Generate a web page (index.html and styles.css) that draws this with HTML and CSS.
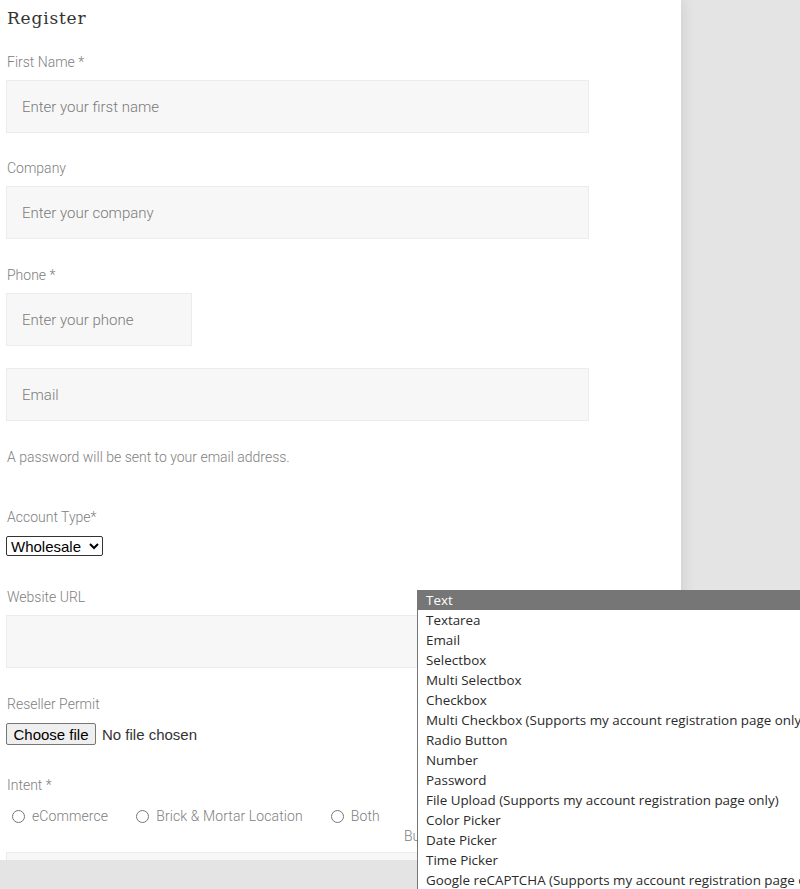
FILE: index.html
```html
<!DOCTYPE html>
<html lang="en">

<head>
    <meta charset="UTF-8">
    <meta name="viewport" content="width=device-width, initial-scale=1.0">
    <link rel="stylesheet" href="styles.css">
</head>

<body>
    <div class="panel">
        <h2 class="title">Register</h2>

        <div class="field">
            <label class="label">First Name *</label>
            <input class="input" type="text" placeholder="Enter your first name">
        </div>

        <div class="field">
            <label class="label">Company</label>
            <input class="input" type="text" placeholder="Enter your company">
        </div>

        <div class="field phone">
            <label class="label">Phone *</label>
            <input class="input small" type="text" placeholder="Enter your phone">
        </div>

        <div class="field email">
            <input class="input" type="email" placeholder="Email">
        </div>

        <p class="note">A password will be sent to your email address.</p>

        <div class="field account">
            <label class="label">Account Type*</label>
            <select class="select">
                <option>Wholesale</option>
                <option>Retail</option>
            </select>
        </div>

        <div class="field website">
            <label class="label">Website URL</label>
            <input class="input" type="text">
        </div>

        <div class="field permit">
            <label class="label">Reseller Permit</label>
            <div class="file">
                <button class="file-btn" type="button">Choose file</button>
                <span class="file-name">No file chosen</span>
            </div>
        </div>

        <div class="field intent">
            <label class="label">Intent *</label>
            <div class="radios">
                <label class="radio"><input type="radio" name="intent"><span>eCommerce</span></label>
                <label class="radio"><input type="radio" name="intent"><span>Brick &amp; Mortar Location</span></label>
                <label class="radio"><input type="radio" name="intent"><span>Both</span></label>
            </div>
            <div class="hidden-label">Bu</div>
            <input class="input" type="text">
        </div>
    </div>

    <ul class="dropdown">
        <li class="active">Text</li>
        <li>Textarea</li>
        <li>Email</li>
        <li>Selectbox</li>
        <li>Multi Selectbox</li>
        <li>Checkbox</li>
        <li>Multi Checkbox (Supports my account registration page only)</li>
        <li>Radio Button</li>
        <li>Number</li>
        <li>Password</li>
        <li>File Upload (Supports my account registration page only)</li>
        <li>Color Picker</li>
        <li>Date Picker</li>
        <li>Time Picker</li>
        <li>Google reCAPTCHA (Supports my account registration page only)</li>
    </ul>
</body>

</html>
```

FILE: styles.css
```css
body {
    margin: 0;
    background-color: #e4e4e4;
    font-family: Roboto, "Liberation Sans", sans-serif;
    overflow: hidden;
}

.panel {
    width: 675px;
    height: 860px;
    padding-left: 6px;
    background-color: #fff;
    box-shadow: 0 0 14px rgba(0, 0, 0, 0.12);
    overflow: hidden;
}

.title {
    margin: 0;
    padding-left: 1px;
    font-family: "DejaVu Serif", serif;
    font-weight: normal;
    font-size: 17px;
    letter-spacing: 0.8px;
    line-height: 36px;
    color: #333;
}

.field {
    margin-top: 16px;
}

.field + .field {
    margin-top: 25px;
}

.label {
    display: block;
    padding-left: 1px;
    font-size: 14px;
    font-weight: 300;
    line-height: 20px;
    color: #808080;
    margin-bottom: 8px;
}

.input {
    display: block;
    box-sizing: border-box;
    width: 583px;
    height: 53px;
    padding: 0 15px;
    border: 1px solid #ececec;
    background-color: #f7f7f7;
    font-family: Roboto, sans-serif;
    font-size: 15px;
    font-weight: 300;
    color: #555;
    outline: none;
}

.input::placeholder {
    color: #7a7a7a;
}

.input.small {
    width: 186px;
}

.field.phone {
    margin-top: 26px;
}

.field.email {
    margin-top: 22px;
}

.note {
    margin: 26px 0 0;
    padding-left: 1px;
    font-size: 14px;
    font-weight: 300;
    line-height: 20px;
    color: #808080;
}

.field.account {
    margin-top: 40px;
}

.field.account .label {
    margin-bottom: 9px;
}

.select {
    display: block;
    width: 97px;
    font-family: "Liberation Sans", Arial, sans-serif;
    font-size: 15px;
    height: 20px;
    padding: 0;
    color: #000;
    border: 1px solid #333;
    border-radius: 2px;
    background: #fff;
}

.field.website {
    margin-top: 31px;
}

.field.permit {
    margin-top: 26px;
}

.field.permit .label {
    margin-bottom: 9px;
}

.file {
    display: flex;
    align-items: center;
    gap: 6px;
    height: 22px;
    font-family: "Liberation Sans", Arial, sans-serif;
    font-size: 15px;
}

.file-btn {
    box-sizing: border-box;
    width: 90px;
    height: 22px;
    padding: 0;
    font-family: inherit;
    font-size: 15px;
    color: #000;
    background-color: #efefef;
    border: 1px solid #767676;
    border-radius: 2px;
}

.file-name {
    color: #333;
}

.field.intent {
    margin-top: 30px;
}

.field.intent .label {
    margin-bottom: 11px;
}

.radios {
    display: flex;
    gap: 22px;
    height: 20px;
    align-items: center;
}

.radio {
    display: flex;
    align-items: center;
    font-size: 14px;
    font-weight: 300;
    letter-spacing: 0.1px;
    color: #808080;
}

.radio input {
    width: 13px;
    height: 13px;
    margin: 0 7px 0 6px;
}

.hidden-label {
    margin-left: 398px;
    font-size: 14px;
    font-weight: 300;
    line-height: 20px;
    color: #808080;
    margin-bottom: 6px;
}

.dropdown {
    position: absolute;
    left: 417px;
    top: 590px;
    width: 420px;
    margin: 0;
    padding: 0;
    list-style: none;
    background-color: #fff;
    border-left: 1px solid #767676;
    font-family: "Open Sans", "Noto Sans", sans-serif;
    font-size: 13.4px;
    color: #2a2a2a;
}

.dropdown li {
    height: 20px;
    line-height: 20px;
    padding-left: 8px;
    white-space: nowrap;
}

.dropdown li.active {
    background-color: #767676;
    color: #fff;
}
```
